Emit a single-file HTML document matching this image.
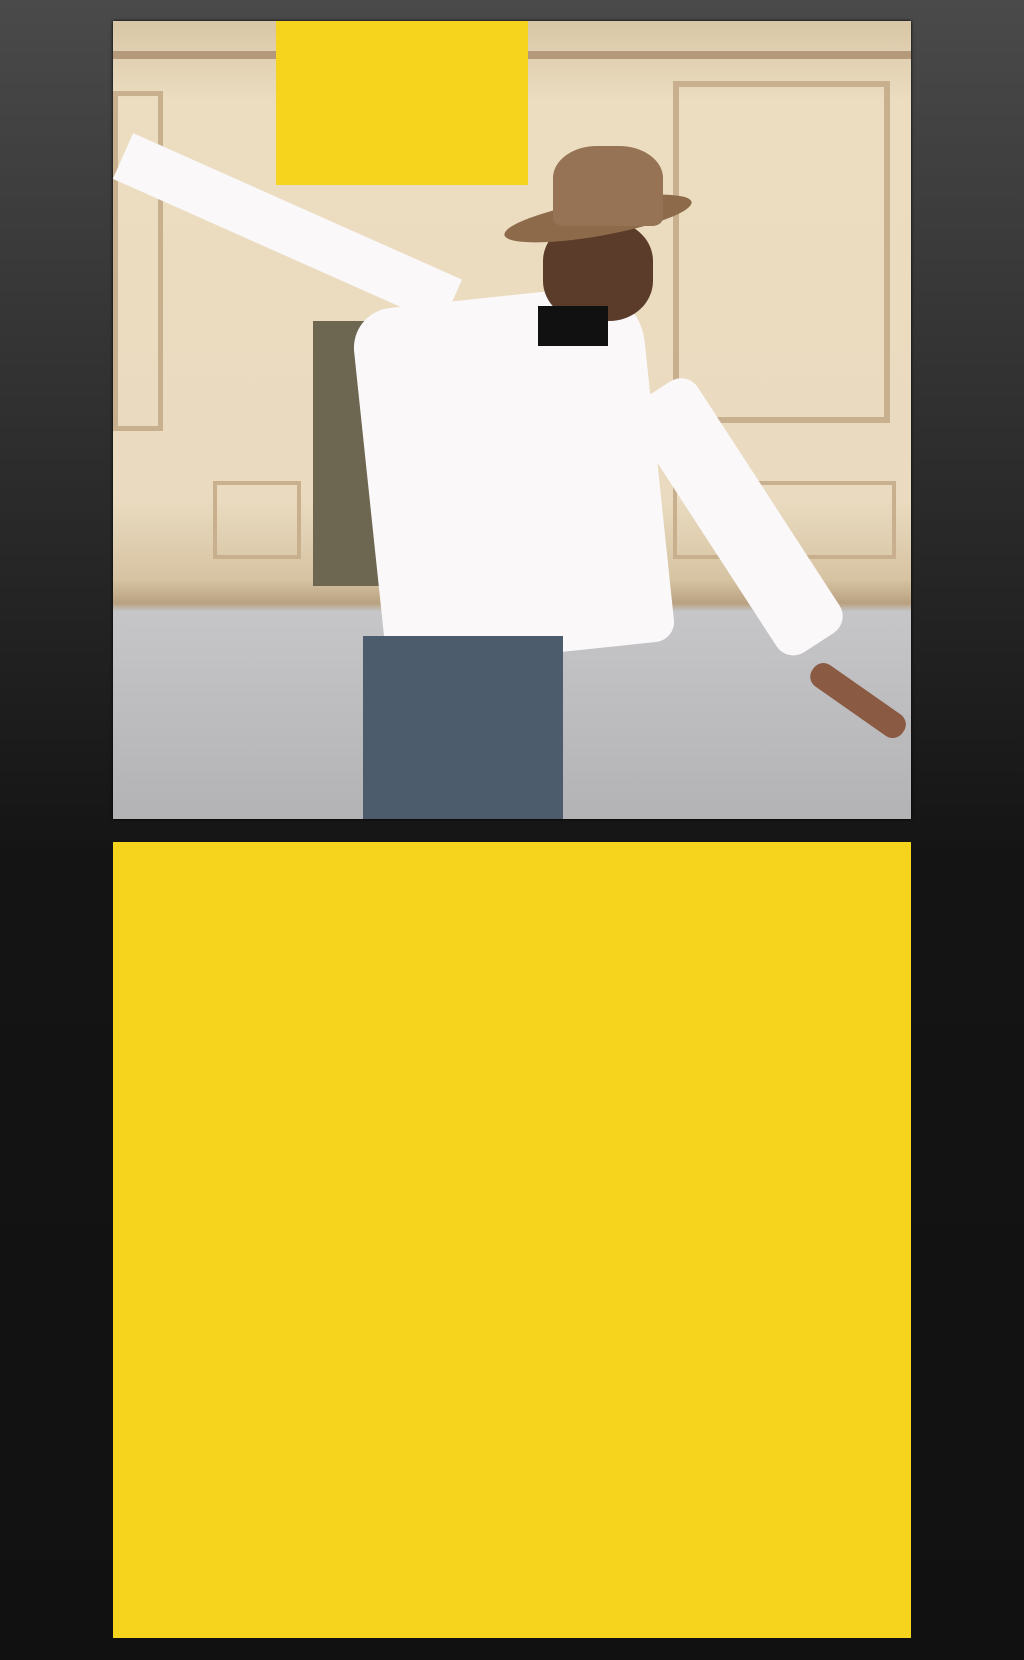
<!DOCTYPE html>
<html><head><style>
html,body{margin:0;padding:0;}
body{width:1024px;height:1660px;background:linear-gradient(#4a4a4a 0px,#2a2a2a 500px,#141414 860px,#111 1660px);position:relative;overflow:hidden;font-family:"Liberation Sans",sans-serif;}
.photo{position:absolute;left:113px;top:21px;width:798px;height:798px;overflow:hidden;box-shadow:0 0 3px #000;background:linear-gradient(#d8c7a6 0%,#ecdcc0 10%,#eadbc0 60%,#d6c3a2 70%,#b9a180 73%,#c6c6c8 74%,#b3b3b5 100%);}
.y1{position:absolute;left:276px;top:21px;width:252px;height:164px;background:#f6d31c;}
.y2{position:absolute;left:113px;top:842px;width:798px;height:796px;background:#f6d31c;}
.p{position:absolute;}
</style></head><body>
<div class="photo">
 <div class="p" style="left:0;top:30px;width:798px;height:8px;background:#b49a7a"></div>
 <div class="p" style="left:560px;top:60px;width:205px;height:330px;border:6px solid #c8b08e"></div>
 <div class="p" style="left:0;top:70px;width:40px;height:330px;border:5px solid #c8b08e"></div>
 <div class="p" style="left:200px;top:300px;width:120px;height:265px;background:#6d6650"></div>
 <div class="p" style="left:560px;top:460px;width:215px;height:70px;border:4px solid #c8b08e"></div>
 <div class="p" style="left:100px;top:460px;width:80px;height:70px;border:4px solid #c8b08e"></div>
 <div class="p" style="left:255px;top:275px;width:290px;height:360px;background:#fbf8fa;border-radius:40px 60px 20px 20px;transform:rotate(-6deg)"></div>
 <div class="p" style="left:10px;top:110px;width:360px;height:50px;background:#fbf8fa;transform:rotate(24deg);transform-origin:left"></div>
 <div class="p" style="left:505px;top:370px;width:75px;height:300px;background:#fbf8fa;transform:rotate(-33deg);transform-origin:top center;border-radius:20px"></div>
 <div class="p" style="left:700px;top:635px;width:110px;height:26px;background:#8a5a42;transform:rotate(35deg);transform-origin:left;border-radius:12px"></div>
 <div class="p" style="left:250px;top:615px;width:200px;height:190px;background:#4d5c6c"></div>
 <div class="p" style="left:430px;top:200px;width:110px;height:100px;background:#5b3b2a;border-radius:40%"></div>
 <div class="p" style="left:390px;top:180px;width:190px;height:35px;background:#8c6a4a;border-radius:50%;transform:rotate(-10deg)"></div>
 <div class="p" style="left:440px;top:125px;width:110px;height:80px;background:#957354;border-radius:40% 40% 10% 10%"></div>
 <div class="p" style="left:425px;top:285px;width:70px;height:40px;background:#111"></div>
</div>
<div class="y1"></div>
<div class="y2"></div>
</body></html>
